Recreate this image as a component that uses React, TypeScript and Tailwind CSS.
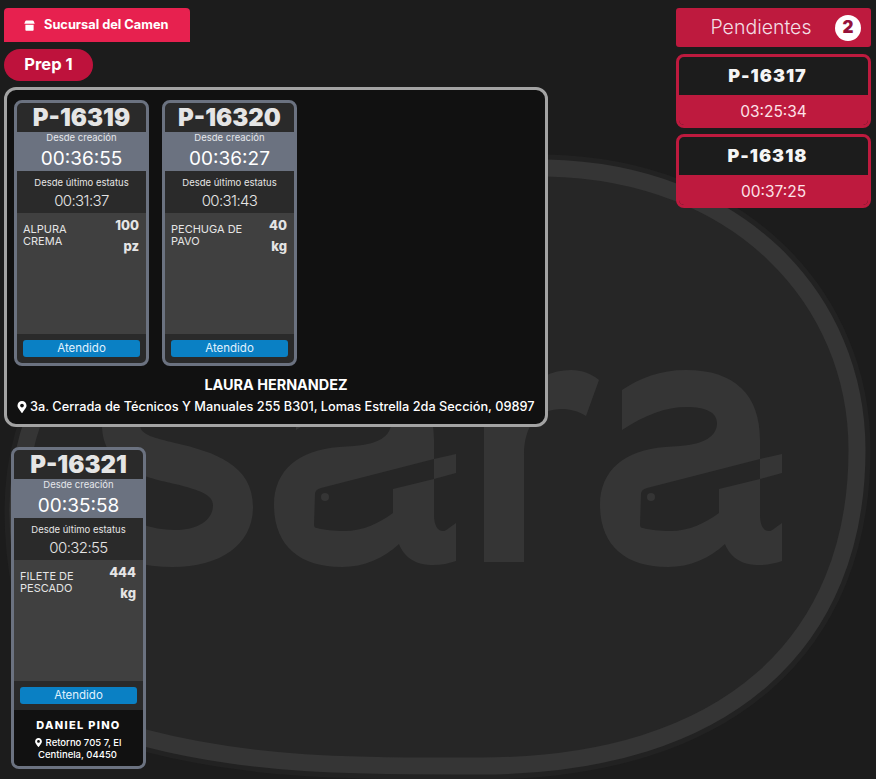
import React from 'react'
import { FaMapMarkerAlt } from 'react-icons/fa'

const font = { fontFamily: 'Inter, "Noto Sans", sans-serif' }

const LetterA = ({ dx }: { dx: number }) => (
  <g transform={`translate(${dx} 0)`}>
    <path
      fill="#353535"
      d="M622 390C640 378 660 370 686 370C735 370 760 395 760 440L760 459L782 454L782 473L760 479L760 515C760 530 768 535 775 528L782 523L782 561C765 567 735 570 725 544C710 558 690 567 668 567C625 567 600 545 600 505C600 470 625 450 665 447L680 446C705 444 717 436 717 423C717 412 705 407 687 407C665 407 645 415 622 430Z"
    />
    <path
      fill="#262626"
      d="M760 459L647 488C643 489 641 491 641 494L640 525C640 527 641 528 643 528C650 530 660 531 670 531C690 531 705 523 719 513L719 489L760 479Z"
    />
    <circle cx="651" cy="497" r="4" fill="#353535" />
  </g>
)

// watermark logo behind everything
const Watermark = () => (
  <svg className="absolute inset-0" width="876" height="779" viewBox="0 0 876 779" fill="none">
    <path
      d="M547 168C740 172 857 300 857 450C857 640 730 766 480 766C370 766 260 768 145 738C60 715 18 620 18 510C18 300 250 165 547 168Z"
      fill="#262626"
      stroke="#222222"
      strokeWidth="27"
    />
    <path
      d="M547 168C740 172 857 300 857 450C857 640 730 766 480 766C370 766 260 768 145 738C60 715 18 620 18 510C18 300 250 165 547 168Z"
      fill="#262626"
      stroke="#353535"
      strokeWidth="17"
    />
    <path
      fill="#353535"
      d="M240 395C215 378 190 370 170 370C125 370 102 395 102 425C102 470 150 478 175 484C200 490 213 495 213 505C213 522 195 530 175 530C150 530 125 520 105 505L90 545C115 560 145 567 173 567C220 567 253 545 253 507C253 465 215 452 175 443C155 438 140 435 140 425C140 412 155 407 172 407C190 407 210 415 225 425Z"
    />
    <LetterA dx={-326} />
    <path
      fill="#353535"
      d="M484 370L522 370L522 395C535 378 552 370 571 370C582 370 592 374 599 380L586 416C578 411 570 409 562 409C538 409 524 425 524 455L524 562L484 562Z"
    />
    <LetterA dx={0} />
  </svg>
)

const StoreIcon = () => (
  <svg width="11" height="11" viewBox="0 0 12 12" fill="white" className="ml-[1px] mt-[1px]">
    <path d="M2.500 .5h7c.5 0 .8.2 1 .6l1.200 2.900H.3l1.200-2.900c.2-.4.5-.6 1-.6z" />
    <path d="M1.500 5.200h9v5.300c0 .8-.5 1.300-1.300 1.300H2.800c-.8 0-1.300-.5-1.300-1.300z" />
  </svg>
)

type Order = {
  code: string
  created: string
  status: string
  item: string
  qty: string
  unit: string
}

const OrderCard = ({ order, children }: { order: Order; children?: React.ReactNode }) => (
  <div className="w-[135px] shrink-0 overflow-hidden rounded-lg border-[3px] border-[#6b7280] bg-[#2a2a2a]">
    <div className="flex h-[29px] items-center justify-center text-[24px] font-black text-[#e5e5e5]">
      {order.code}
    </div>
    <div className="flex h-[39px] flex-col items-center bg-[#6b7280] text-white">
      <div className="text-[9.500px] leading-[12px] text-[#e5e7eb]">Desde creación</div>
      <div className="mt-[3px] text-[19px] leading-[24px] text-white">{order.created}</div>
    </div>
    <div className="flex h-[42px] flex-col items-center pt-[6px] text-[#e5e5e5]">
      <div className="text-[9.500px] leading-[12px]">Desde último estatus</div>
      <div className="mt-[2px] text-[15px] font-light leading-[20px] tracking-[-0.6px]">{order.status}</div>
    </div>
    <div className="flex h-[121px] justify-between bg-[#404040] pl-[6px] pr-[7px] pt-[5px]">
      <div className="mt-[5px] w-[80px] text-[11px] leading-[12px] text-[#e5e5e5]">{order.item}</div>
      <div className="text-right text-[13px] font-extrabold leading-[14px] text-[#e5e5e5]">
        <div>{order.qty}</div>
        <div className="mt-[7px]">{order.unit}</div>
      </div>
    </div>
    <div className="flex h-[29px] items-center px-[6px]">
      <div className="flex h-[17px] w-full items-center justify-center rounded-[3px] bg-[#0a80c4] text-[11.500px] text-[#e0f2fe]">
        Atendido
      </div>
    </div>
    {children}
  </div>
)

const Pending = ({ code, time }: { code: string; time: string }) => (
  <div className="overflow-hidden rounded-lg border-[3px] border-[#be1a3e] bg-[#1c1c1c]">
    <div className="flex h-[38px] items-center justify-center pb-[2px] pr-[12px] text-[18px] font-black tracking-[1px] text-[#f5f5f5]">
      {code}
    </div>
    <div className="flex h-[30px] items-center justify-center bg-[#be1a3e] pt-[4px] text-[15.500px] text-[#fde2e8]">
      {time}
    </div>
  </div>
)

export default function App() {
  return (
    <div className="relative h-[779px] w-[876px] overflow-hidden bg-[#1c1c1c]" style={font}>
      <Watermark />
      <div className="relative flex items-start justify-between pl-[4px] pr-[5px] pt-[8px]">
        <div className="w-[544px]">
          <div className="flex h-[34px] w-[186px] items-center gap-[9px] rounded-t-[4px] bg-[#e7214f] pl-[19px] text-[12.800px] font-bold text-white">
            <StoreIcon />
            Sucursal del Camen
          </div>
          <div className="mt-[7px] flex h-[32px] w-[89px] items-center justify-center rounded-full bg-[#be123c] pb-[1px] text-[16.500px] font-bold text-white">
            Prep 1
          </div>
          <div className="mt-[6px] h-[340px] rounded-xl border-[3px] border-[#a3a3a3] bg-[#111111] pl-[7px] pt-[10px]">
            <div className="flex gap-[13px]">
              <OrderCard
                order={{ code: 'P-16319', created: '00:36:55', status: '00:31:37', item: 'ALPURA CREMA', qty: '100', unit: 'pz' }}
              />
              <OrderCard
                order={{ code: 'P-16320', created: '00:36:27', status: '00:31:43', item: 'PECHUGA DE PAVO', qty: '40', unit: 'kg' }}
              />
            </div>
            <div className="mt-[10px] pr-[7px] text-center text-[14.400px] font-bold leading-[17px] text-white">
              LAURA HERNANDEZ
            </div>
            <div className="mt-[5px] flex items-center gap-[2px] whitespace-nowrap pl-[2px] text-[12.750px] font-medium leading-[17px] text-white">
              <FaMapMarkerAlt className="text-[12px]" />
              3a. Cerrada de Técnicos Y Manuales 255 B301, Lomas Estrella 2da Sección, 09897
            </div>
          </div>
          <div className="ml-[7px] mt-[20px]">
            <OrderCard
              order={{ code: 'P-16321', created: '00:35:58', status: '00:32:55', item: 'FILETE DE PESCADO', qty: '444', unit: 'kg' }}
            >
              <div className="h-[56px] bg-[#111111] pt-[8px] text-center text-white">
                <div className="text-[11px] font-extrabold leading-[14px] tracking-[1.300px]">DANIEL PINO</div>
                <div className="mt-[5px] pl-[5px] pr-[7px] text-[9.500px] font-medium leading-[12px]">
                  <FaMapMarkerAlt className="mr-[3px] inline align-[-1px] text-[9px]" />
                  Retorno 705 7, El Centinela, 04450
                </div>
              </div>
            </OrderCard>
          </div>
        </div>
        <div className="flex w-[195px] flex-col gap-[6px]">
          <div className="relative mb-[1px] flex h-[39px] items-center justify-center rounded-[3px] bg-[#be1a3e] pr-[25px] text-[19.500px] font-light text-[#f3dfe4]">
            Pendientes
            <div className="absolute right-[10px] top-[7px] flex h-[26px] w-[26px] items-center justify-center rounded-full bg-white text-[17px] font-black text-[#96123a]">
              2
            </div>
          </div>
          <Pending code="P-16317" time="03:25:34" />
          <Pending code="P-16318" time="00:37:25" />
        </div>
      </div>
    </div>
  )
}
